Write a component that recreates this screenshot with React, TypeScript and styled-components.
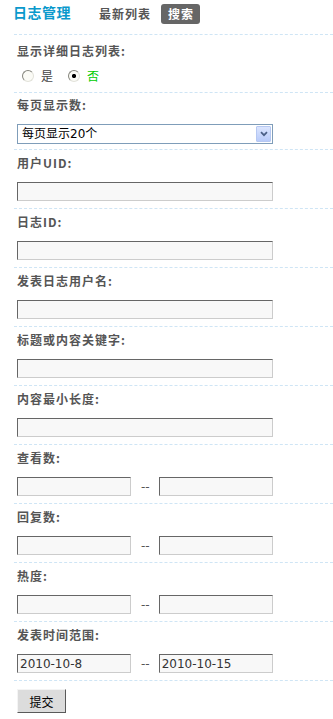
import React from "react";
import styled, { createGlobalStyle } from "styled-components";

type Field =
  | { kind: "text"; label: string }
  | { kind: "range"; label: string; from?: string; to?: string };

const fields: Field[] = [
  { kind: "text", label: "用户UID:" },
  { kind: "text", label: "日志ID:" },
  { kind: "text", label: "发表日志用户名:" },
  { kind: "text", label: "标题或内容关键字:" },
  { kind: "text", label: "内容最小长度:" },
  { kind: "range", label: "查看数:" },
  { kind: "range", label: "回复数:" },
  { kind: "range", label: "热度:" },
  { kind: "range", label: "发表时间范围:", from: "2010-10-8", to: "2010-10-15" },
];

export default function App() {
  return (
    <Page>
      <GlobalStyle />
      <Header>
        <Title>日志管理</Title>
        <Tab>最新列表</Tab>
        <Tab $active>搜索</Tab>
      </Header>
      <Form onSubmit={(e) => e.preventDefault()}>
        <Section $top={9} $gap={11} $bottom={9}>
          <Label>显示详细日志列表:</Label>
          <RadioRow>
            <RadioOption>
              <Radio name="detail" />
              <RadioText>是</RadioText>
            </RadioOption>
            <RadioOption>
              <Radio name="detail" defaultChecked />
              <RadioText $color="#00cc00">否</RadioText>
            </RadioOption>
          </RadioRow>
        </Section>
        <Section $top={5} $gap={12} $bottom={5}>
          <Label>每页显示数:</Label>
          <SelectBox>
            <Select defaultValue="20">
              <option value="20">每页显示20个</option>
              <option value="50">每页显示50个</option>
              <option value="100">每页显示100个</option>
            </Select>
            <Arrow>
              <svg width="8" height="6" viewBox="0 0 8 6">
                <path d="M1 1.2 L4 4.2 L7 1.2" fill="none" stroke="#4a5f86" strokeWidth="1.7" />
              </svg>
            </Arrow>
          </SelectBox>
        </Section>
        {fields.map((f) => (
          <Section key={f.label} $top={6} $gap={12} $bottom={7}>
            <Label>{f.label}</Label>
            {f.kind === "text" ? (
              <TextInput $w={256} />
            ) : (
              <RangeRow>
                <TextInput $w={114} defaultValue={f.from} />
                <Sep>--</Sep>
                <TextInput $w={114} defaultValue={f.to} />
              </RangeRow>
            )}
          </Section>
        ))}
        <Section $top={8} $gap={0} $bottom={6}>
          <SubmitButton type="submit">提交</SubmitButton>
        </Section>
      </Form>
    </Page>
  );
}

const GlobalStyle = createGlobalStyle`
  body {
    margin: 0;
    background: #fff;
    font-family: "Noto Sans CJK SC", sans-serif;
  }
`;

const Page = styled.div`
  width: 333px;
  overflow: hidden;
`;

const Header = styled.div`
  display: flex;
  align-items: flex-start;
  height: 34px;
  box-sizing: border-box;
  padding: 4px 0 0 13px;
`;

const Title = styled.h1`
  margin: 0 28px 0 0;
  font-size: 14px;
  line-height: 16px;
  font-weight: bold;
  letter-spacing: 0.5px;
  color: #0a99cc;
`;

const Tab = styled.a<{ $active?: boolean }>`
  display: block;
  margin-right: 10px;
  padding: ${(p) => (p.$active ? "0 6px 0 7px" : "0")};
  font-size: 12px;
  line-height: 20px;
  font-weight: bold;
  letter-spacing: 1px;
  color: ${(p) => (p.$active ? "#fff" : "#555")};
  background: ${(p) => (p.$active ? "#666" : "transparent")};
  border-radius: 3px;
  cursor: pointer;
`;

const Form = styled.form`
  margin: 0 0 0 14px;
`;

const Section = styled.div<{ $top: number; $gap: number; $bottom: number }>`
  display: flex;
  flex-direction: column;
  align-items: flex-start;
  gap: ${(p) => p.$gap}px;
  padding: ${(p) => `${p.$top}px 0 ${p.$bottom}px 3px`};
  border-top: 1px dashed #cfe5f5;
`;

const Label = styled.label`
  font-size: 12px;
  line-height: 14px;
  font-weight: bold;
  letter-spacing: 1px;
  color: #555;
`;

const RadioRow = styled.div`
  display: flex;
  align-items: center;
  height: 14px;
  padding-left: 5px;
`;

const RadioOption = styled.label`
  display: flex;
  align-items: center;
  gap: 7px;
  & + & {
    margin-left: 15px;
  }
`;

const Radio = styled.input.attrs({ type: "radio" })`
  appearance: none;
  margin: 0;
  width: 12px;
  height: 12px;
  box-sizing: border-box;
  border-radius: 50%;
  border: 1px solid;
  border-color: #85857d #e2e2da #e2e2da #85857d;
  background: #fbfbf6;
  &:checked {
    background: radial-gradient(circle, #000 0 1.8px, #fbfbf6 2.4px);
  }
`;

const RadioText = styled.span<{ $color?: string }>`
  font-size: 12px;
  line-height: 14px;
  color: ${(p) => p.$color ?? "#444"};
`;

const SelectBox = styled.div`
  display: flex;
  align-items: center;
  width: 256px;
  height: 20px;
  box-sizing: border-box;
  border: 1px solid #7f9db9;
  background: #fff;
`;

const Select = styled.select`
  flex: 1;
  appearance: none;
  height: 18px;
  margin: 0;
  padding: 0 0 0 4px;
  border: 0;
  outline: none;
  background: transparent;
  font: 12px "DejaVu Sans", "Noto Sans CJK SC", sans-serif;
  color: #000;
`;

const Arrow = styled.span`
  display: flex;
  align-items: center;
  justify-content: center;
  width: 15px;
  height: 16px;
  margin-right: 1px;
  box-sizing: border-box;
  border: 1px solid #b6c8f2;
  border-radius: 1px;
  background: linear-gradient(#dbe5fe, #b8cbfa);
`;

const RangeRow = styled.div`
  display: flex;
  align-items: center;
`;

const TextInput = styled.input.attrs({ type: "text" })<{ $w: number }>`
  width: ${(p) => p.$w}px;
  height: 19px;
  box-sizing: border-box;
  margin: 0;
  padding: 0 2px;
  border: 1px solid;
  border-color: #666 #ccc #ccc #666;
  background: #f8f8f8;
  outline: none;
  font: 12px "DejaVu Sans", sans-serif;
  color: #333;
`;

const Sep = styled.span`
  margin: 0 9px 0 10px;
  font: 12px "DejaVu Sans", sans-serif;
  color: #555;
`;

const SubmitButton = styled.button`
  width: 49px;
  height: 24px;
  box-sizing: border-box;
  margin: 0;
  padding: 0;
  border: 1px solid;
  border-color: #f4f4f4 #5a5a5a #5a5a5a #f4f4f4;
  background: #dcdcdc;
  font: 12px "Noto Sans CJK SC", sans-serif;
  color: #000;
  cursor: pointer;
`;
